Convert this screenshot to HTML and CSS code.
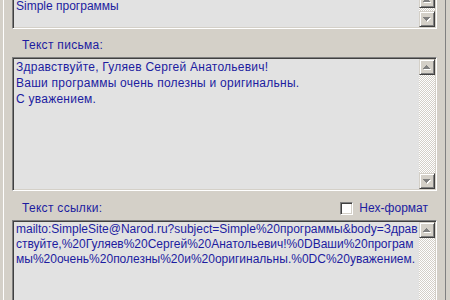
FILE: index.html
```html
<!DOCTYPE html>
<html lang="ru">
<head>
    <meta charset="UTF-8">
    <title>Mailto</title>
    <link rel="stylesheet" href="styles.css">
</head>
<body>
    <div class="form">
        <div class="memo memo-subject">
            <div class="memo-text">Simple программы</div>
            <div class="vscroll">
                <span class="sb-btn"><svg width="9" height="5" viewBox="0 0 9 5"><polygon class="arrow-hi" points="4.5,1 8,5 1,5"/><polygon class="arrow" points="3.5,0 7,4 0,4"/></svg></span>
                <span class="sb-track"></span>
                <span class="sb-btn"><svg width="9" height="5" viewBox="0 0 9 5"><polygon class="arrow-hi" points="1,1 8,1 4.5,5"/><polygon class="arrow" points="0,0 7,0 3.5,4"/></svg></span>
            </div>
        </div>

        <div class="field-label">Текст письма:</div>

        <div class="memo memo-body">
            <div class="memo-text">
                <div>Здравствуйте, Гуляев Сергей Анатольевич!</div>
                <div>Ваши программы очень полезны и оригинальны.</div>
                <div>С уважением.</div>
            </div>
            <div class="vscroll">
                <span class="sb-btn"><svg width="9" height="5" viewBox="0 0 9 5"><polygon class="arrow-hi" points="4.5,1 8,5 1,5"/><polygon class="arrow" points="3.5,0 7,4 0,4"/></svg></span>
                <span class="sb-track"></span>
                <span class="sb-btn"><svg width="9" height="5" viewBox="0 0 9 5"><polygon class="arrow-hi" points="1,1 8,1 4.5,5"/><polygon class="arrow" points="0,0 7,0 3.5,4"/></svg></span>
            </div>
        </div>

        <div class="field-label label-row">
            <span>Текст ссылки:</span>
            <label class="check"><span class="check-box"></span>Hex-формат</label>
        </div>

        <div class="memo memo-link">
            <div class="memo-text">
                <div>mailto:SimpleSite@Narod.ru?subject=Simple%20программы&amp;body=Здрав</div>
                <div>ствуйте,%20Гуляев%20Сергей%20Анатольевич!%0DВаши%20програм</div>
                <div>мы%20очень%20полезны%20и%20оригинальны.%0DС%20уважением.</div>
            </div>
            <div class="vscroll">
                <span class="sb-btn"><svg width="9" height="5" viewBox="0 0 9 5"><polygon class="arrow-hi" points="4.5,1 8,5 1,5"/><polygon class="arrow" points="3.5,0 7,4 0,4"/></svg></span>
                <span class="sb-track"></span>
            </div>
        </div>
    </div>
</body>
</html>
```

FILE: styles.css
```css
body {
    margin: 0;
    height: 300px;
    overflow: hidden;
    background: #d4d0c8;
    color: #1c1ca0;
    font-family: "Liberation Sans", Arial, sans-serif;
    font-size: 12px;
    line-height: 16px;
}

.form {
    margin: -10px 4px 0 3px;
    padding: 0 8px;
    height: 320px;
    border-left: 1px solid #fff;
    border-right: 1px solid #808080;
}

/* sunken edit box */
.memo {
    display: flex;
    padding: 1px;
    background: #e2e2e2;
    border: 1px solid;
    border-color: #808080 #fff #fff #808080;
    box-shadow: inset 1px 1px #404040, inset -1px -1px #d4d0c8;
}

.memo-text {
    flex: 1;
    padding: 0 2px;
    overflow: hidden;
    white-space: nowrap;
}

.memo-subject {
    height: 35px;
}

.memo-subject .memo-text {
    padding-top: 8px;
    line-height: 12px;
}

.memo-body {
    height: 130px;
    letter-spacing: 0.25px;
}

.memo-link {
    height: 100px;
}

.memo-link .memo-text {
    line-height: 15px;
}

.vscroll {
    width: 16px;
    display: flex;
    flex-direction: column;
}

.sb-btn {
    box-sizing: border-box;
    width: 16px;
    height: 16px;
    flex: none;
    display: flex;
    align-items: center;
    justify-content: center;
    background: #d4d0c8;
    border: 1px solid;
    border-color: #d4d0c8 #404040 #404040 #d4d0c8;
    box-shadow: inset 1px 1px #fff, inset -1px -1px #808080;
}

.sb-btn svg {
    shape-rendering: crispEdges;
    margin-left: 1px;
}

.arrow {
    fill: #808080;
}

.arrow-hi {
    fill: #fff;
}

.sb-track {
    flex: 1;
    background: repeating-conic-gradient(#d4d0c8 0 25%, #fff 0 50%) 0 0 / 2px 2px;
}

.field-label {
    height: 16px;
    padding: 8px 0 4px 10px;
    letter-spacing: 0.3px;
}

.label-row {
    display: flex;
    justify-content: space-between;
    align-items: center;
    padding-top: 9px;
    letter-spacing: 0;
}

.label-row > span {
    letter-spacing: 0.3px;
}

.check {
    display: flex;
    align-items: center;
    gap: 6px;
    margin-right: 9px;
}

.check-box {
    box-sizing: border-box;
    width: 13px;
    height: 13px;
    background: #fff;
    border: 1px solid;
    border-color: #808080 #fff #fff #808080;
    box-shadow: inset 1px 1px #404040, inset -1px -1px #d4d0c8;
}
```
